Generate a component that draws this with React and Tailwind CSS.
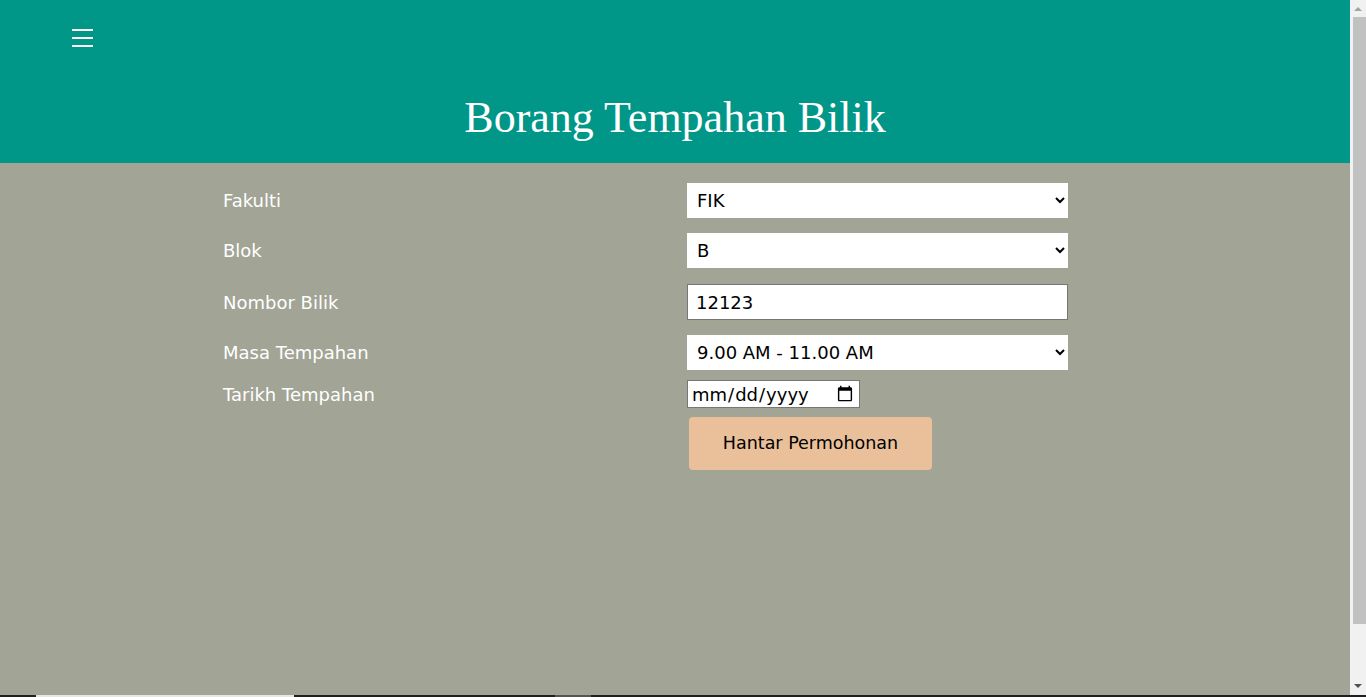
import React from 'react';

const Row = ({ label, children, className = '' }) => (
    <div className={`flex items-center ${className}`}>
        <label className="w-[464px] text-[18px] text-white">{label}</label>
        {children}
    </div>
);

// Fake browser scrollbar, the page in the picture is scrolled to the top
const ScrollBar = () => (
    <div className="flex w-[16px] flex-col items-center bg-[#f1f1f1]">
        <svg width="16" height="17" viewBox="0 0 16 17">
            <path d="M4 11 L8 7 L12 11 Z" fill="#a3a3a3" />
        </svg>
        <div className="ml-[2px] h-[607px] w-[13px] bg-[#c1c1c1]"></div>
        <div className="flex-1"></div>
        <svg width="16" height="17" viewBox="0 0 16 17">
            <path d="M4 6 L8 10 L12 6 Z" fill="#505050" />
        </svg>
    </div>
);

const App = () => {
    return (
        <div className="flex h-[697px] flex-col overflow-hidden font-['DejaVu_Sans',Verdana,sans-serif]">
            <div className="flex min-h-0 flex-1">
                <main className="flex-1 bg-[#a2a495]">
                    {/* Header */}
                    <header className="h-[163px] bg-[#009688] px-[72px] pt-[29px]">
                        <button className="flex w-[21px] flex-col gap-[6px]">
                            <span className="block h-[2px] w-full bg-white"></span>
                            <span className="block h-[2px] w-full bg-white"></span>
                            <span className="block h-[2px] w-full bg-white"></span>
                        </button>
                        <h1 className="mt-[49px] text-center font-['Liberation_Serif','Times_New_Roman',serif] text-[44px] leading-none text-white">
                            Borang Tempahan Bilik
                        </h1>
                    </header>

                    {/* Form */}
                    <form className="pl-[223px] pt-[20px]" onSubmit={(e) => e.preventDefault()}>
                        <Row label="Fakulti">
                            <select className="h-[35px] w-[381px] bg-white px-[6px] text-[18px] text-black" defaultValue="FIK">
                                <option>FIK</option>
                                <option>FSK</option>
                            </select>
                        </Row>
                        <Row label="Blok" className="mt-[15px]">
                            <select className="h-[35px] w-[381px] bg-white px-[6px] text-[18px] text-black" defaultValue="B">
                                <option>A</option>
                                <option>B</option>
                            </select>
                        </Row>
                        <Row label="Nombor Bilik" className="mt-[16px]">
                            <input
                                type="text"
                                defaultValue="12123"
                                className="h-[36px] w-[381px] border border-[#767676] bg-white px-[8px] text-[18px] text-black"
                            />
                        </Row>
                        <Row label="Masa Tempahan" className="mt-[15px]">
                            <select className="h-[35px] w-[381px] bg-white px-[6px] text-[18px] text-black" defaultValue="9.00 AM - 11.00 AM">
                                <option>9.00 AM - 11.00 AM</option>
                                <option>11.00 AM - 1.00 PM</option>
                            </select>
                        </Row>
                        <Row label="Tarikh Tempahan" className="mt-[10px]">
                            <input
                                type="date"
                                className="h-[28px] w-[173px] border border-[#767676] bg-white px-[3px] text-[18px] text-black"
                            />
                        </Row>
                        <div className="mt-[9px] pl-[466px]">
                            <button type="submit" className="h-[53px] w-[243px] rounded-[4px] bg-[#eac09b] text-[17.5px] text-black">
                                Hantar Permohonan
                            </button>
                        </div>
                    </form>
                </main>
                <ScrollBar />
            </div>
            {/* taskbar edge */}
            <div className="flex h-[2px] bg-[#202020]">
                <div className="ml-[36px] w-[258px] bg-[#e6e6e6]"></div>
                <div className="ml-[261px] w-[36px] bg-[#555555]"></div>
            </div>
        </div>
    );
};

export default App;
